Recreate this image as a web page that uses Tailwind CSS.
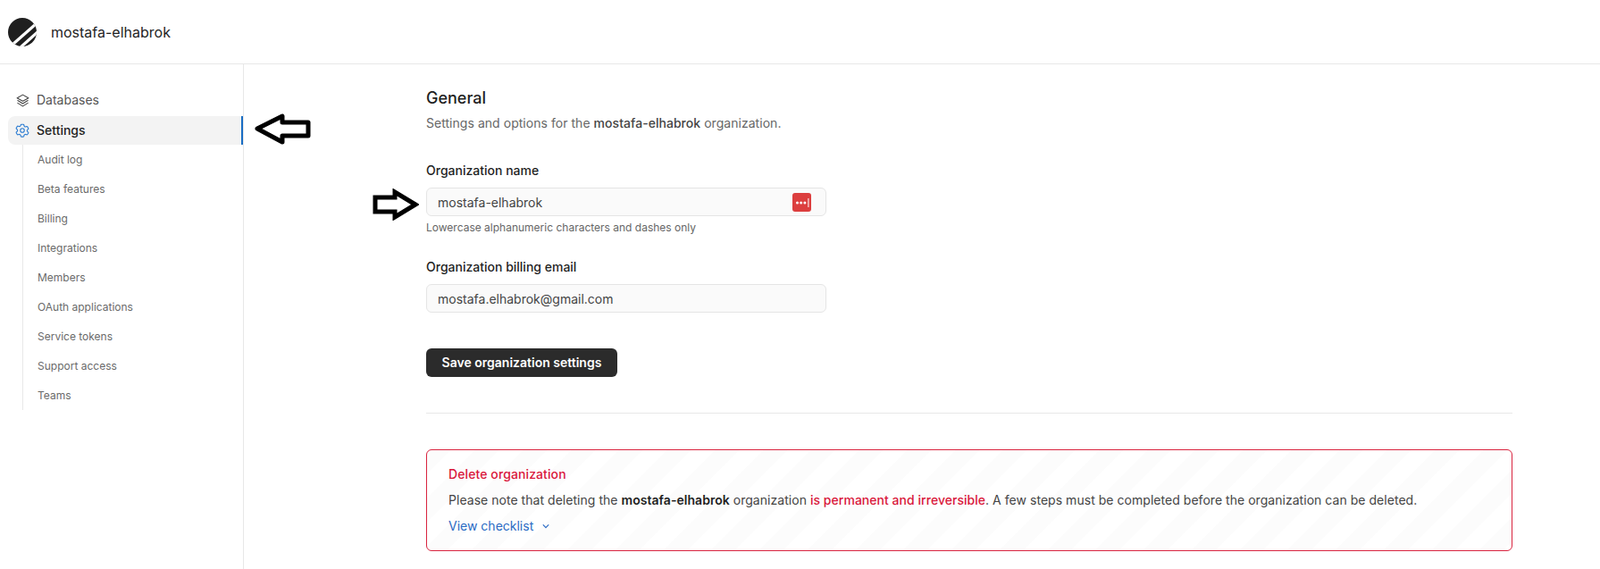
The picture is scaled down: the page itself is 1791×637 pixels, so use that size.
<!DOCTYPE html>
<html lang="en">
<head>
    <meta charset="UTF-8">
    <title>General settings</title>
    <script src="https://cdn.jsdelivr.net/npm/@tailwindcss/browser@4"></script>
</head>
<body class="bg-white font-['Inter',sans-serif] text-[#1f1f1f] overflow-hidden">
<div class="relative h-[637px] w-[1791px] overflow-hidden">
    <!-- top bar -->
    <header class="flex h-[72px] items-center border-b border-[#e8e8e8] pl-[9px]">
        <svg class="h-8 w-8" viewBox="0 0 32 32">
            <defs><clipPath id="logo-clip"><circle cx="16" cy="16" r="16"/></clipPath></defs>
            <g clip-path="url(#logo-clip)">
                <rect width="32" height="32" fill="#1f1f1f"/>
                <path d="M6 29 L31 7" stroke="#fff" stroke-width="3.2"/>
                <path d="M14 33 L33 16" stroke="#fff" stroke-width="3.2"/>
            </g>
        </svg>
        <span class="ml-4 text-base">mostafa-elhabrok</span>
    </header>

    <div class="flex h-[565px]">
        <!-- sidebar -->
        <aside class="w-[273px] shrink-0 border-r border-[#e8e8e8] pt-[22px]">
            <div class="flex h-9 items-center pl-[17px] text-sm text-[#555]">
                <svg class="mr-[7px] h-[17px] w-[17px]" viewBox="0 0 24 24" fill="none" stroke="#444" stroke-width="1.5" stroke-linejoin="round" stroke-linecap="round">
                    <path d="M12 3 21 8 12 13 3 8Z"/>
                    <path d="M4 12 12 17 20 12"/>
                    <path d="M4 16 12 21 20 16"/>
                </svg>
                Databases
            </div>
            <div class="ml-[9px] flex h-8 items-center rounded-l-lg border-r-2 border-[#1a6dc4] bg-[#f3f3f3] pl-[7px] text-sm font-medium">
                <svg class="mr-[7px] h-[18px] w-[18px]" viewBox="0 0 24 24" fill="none" stroke="#2a7bd1" stroke-width="1.5" stroke-linejoin="round" stroke-linecap="round">
                    <path d="M9.6 3.9c.1-.5.5-.9 1-.9h2.8c.5 0 .9.4 1 .9l.2 1.4c.1.4.4.7.7.9l.6.3c.3.2.7.2 1.1.1l1.3-.5c.5-.2 1 0 1.3.4l1.4 2.4c.2.4.1 1-.3 1.3l-1.1.9c-.3.3-.5.6-.5 1v.7c0 .4.2.8.5 1l1.1.9c.4.3.5.9.3 1.3L19.6 18c-.3.4-.8.6-1.3.4l-1.3-.5c-.4-.1-.8-.1-1.1.1l-.6.3c-.3.2-.6.5-.7.9l-.2 1.4c-.1.5-.5.9-1 .9h-2.8c-.5 0-.9-.4-1-.9l-.2-1.4c-.1-.4-.4-.7-.7-.9l-.6-.3c-.3-.2-.7-.2-1.1-.1l-1.3.5c-.5.2-1 0-1.3-.4L3 15.6c-.2-.4-.1-1 .3-1.3l1.1-.9c.3-.2.5-.6.5-1v-.7c0-.4-.2-.7-.5-1l-1.1-.9c-.4-.3-.5-.9-.3-1.3L4.4 6c.3-.4.8-.6 1.3-.4l1.3.5c.4.1.8.1 1.1-.1l.6-.3c.3-.2.6-.5.7-.9Z"/>
                    <circle cx="12" cy="12" r="3"/>
                </svg>
                Settings
            </div>
            <ul class="ml-[25px] w-[200px] border-l border-[#e8e8e8] pl-4 text-xs text-[#6a6a6a]">
                <li class="flex h-[33px] items-center">Audit log</li>
                <li class="flex h-[33px] items-center">Beta features</li>
                <li class="flex h-[33px] items-center">Billing</li>
                <li class="flex h-[33px] items-center">Integrations</li>
                <li class="flex h-[33px] items-center">Members</li>
                <li class="flex h-[33px] items-center">OAuth applications</li>
                <li class="flex h-[33px] items-center">Service tokens</li>
                <li class="flex h-[33px] items-center">Support access</li>
                <li class="flex h-[33px] items-center">Teams</li>
            </ul>
        </aside>

        <!-- settings form -->
        <main class="w-[1420px] pl-[204px] pt-7">
            <div class="w-[1216px]">
                <h1 class="text-lg leading-5 font-medium">General</h1>
                <p class="mt-2 text-sm leading-5 tracking-[0.04px] text-[#666]">Settings and options for the <span class="font-medium text-[#444]">mostafa-elhabrok</span> organization.</p>

                <label class="mt-[33px] block text-sm leading-5 font-medium">Organization name</label>
                <div class="relative mt-[9px] w-[448px]">
                    <input class="h-8 w-full rounded-md border border-[#e5e5e5] bg-[#fafafa] pl-3 text-sm text-[#444]" value="mostafa-elhabrok">
                    <span class="absolute right-[17px] top-[6px] flex h-[21px] w-[21px] items-center justify-center rounded-[3px] bg-[#dc3e3e]">
                        <svg class="h-3 w-4" viewBox="0 0 16 12" fill="#fff">
                            <circle cx="2.5" cy="6" r="1.5"/><circle cx="6.7" cy="6" r="1.5"/><circle cx="10.9" cy="6" r="1.5"/>
                            <rect x="14.4" y="1" width="1" height="10"/>
                        </svg>
                    </span>
                </div>
                <p class="mt-[5px] text-xs leading-4 text-[#666]">Lowercase alphanumeric characters and dashes only</p>

                <label class="mt-[26px] block text-sm leading-5 font-medium">Organization billing email</label>
                <input class="mt-[9px] block h-8 w-[448px] rounded-md border border-[#e5e5e5] bg-[#fafafa] pl-3 text-sm text-[#444]" value="mostafa.elhabrok@gmail.com">

                <button class="mt-10 block h-8 w-[214px] rounded-md bg-[#2b2b2b] text-sm font-semibold text-white">Save organization settings</button>

                <hr class="mt-10 border-[#e8e8e8]">

                <section class="mt-10 h-[114px] rounded-md border border-[#d9243f] bg-[repeating-linear-gradient(135deg,#fcfcfc_0,#fcfcfc_19px,#fff_19px,#fff_38px)] px-6 pt-[17px] text-sm">
                    <h2 class="leading-5 font-medium tracking-[0.1px] text-[#d9173a]">Delete organization</h2>
                    <p class="mt-[9px] leading-5 tracking-[0.036px] text-[#444]">Please note that deleting the <span class="font-semibold text-[#1f1f1f]">mostafa-elhabrok</span> organization <span class="font-medium text-[#d9173a]">is permanent and irreversible</span>. A few steps must be completed before the organization can be deleted.</p>
                    <div class="mt-[9px] flex items-center leading-5 text-[#2a6bc4]">
                        View checklist
                        <svg class="ml-[10px] h-2 w-2" viewBox="0 0 10 10" fill="none" stroke="#2a6bc4" stroke-width="1.4"><path d="M1 3 5 7 9 3"/></svg>
                    </div>
                </section>
            </div>
        </main>
    </div>

    <!-- hand drawn annotation arrows -->
    <svg class="absolute left-[284px] top-[127px] h-[35px] w-16" viewBox="0 0 64 35" fill="none" stroke="#000" stroke-width="5" stroke-linejoin="round">
        <path d="M4 17 32 3V10H61V25H32V32Z"/>
    </svg>
    <svg class="absolute left-[417px] top-[211px] h-9 w-[52px]" viewBox="0 0 52 36" fill="none" stroke="#000" stroke-width="5" stroke-linejoin="miter">
        <path d="M48 18 25 4V10H3V26H25V32Z"/>
    </svg>
</div>
</body>
</html>
